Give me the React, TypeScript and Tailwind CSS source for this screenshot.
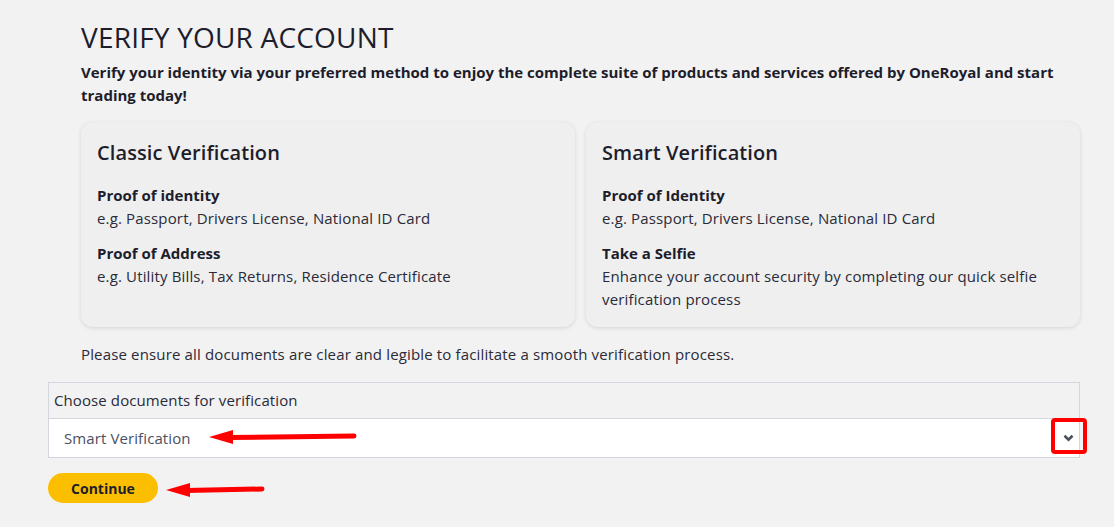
import React from 'react';

type Item = { title: string; text: string };

const Card = (props: { title: string; items: Item[] }) => {
  return (
    <div className="flex-1 rounded-xl bg-[#efefef] px-4 pt-[18px] pb-4 shadow-[0_1px_4px_rgba(0,0,0,0.12)]">
      <p className="text-[20px] font-semibold leading-[26px] tracking-[0.1px] text-[#1d1d2b]">{props.title}</p>
      <div className="mt-[18px] flex flex-col gap-[12px]">
        {props.items.map((item) => (
          <div key={item.title}>
            <p className="text-[15px] font-bold leading-[23px] text-[#1d1d2b]">{item.title}</p>
            <p className="text-[15px] leading-[23px] tracking-[0.15px] text-[#2a2a38]">{item.text}</p>
          </div>
        ))}
      </div>
    </div>
  );
};

const Arrow = (props: { className: string; width: number }) => (
  <svg className={props.className} width={props.width} height="16" viewBox={`0 0 ${props.width} 16`}>
    <polygon points="0,8 24,1 24,15" fill="#ff0000" />
    <line x1="20" y1="8.5" x2={props.width - 3} y2="7" stroke="#ff0000" strokeWidth="5" strokeLinecap="round" />
  </svg>
);

const App = () => {
  return (
    <div className="relative min-h-[527px] bg-[#f2f2f2] pl-12 pr-[34px] pt-[20px] font-['Open_Sans',sans-serif] text-[#1d1d2b]">
      <div className="pl-[33px]">
        <h1 className="text-[28px] font-normal leading-[34px] tracking-[0.2px] text-[#1d1d2b]">VERIFY YOUR ACCOUNT</h1>
        <p className="mt-[7px] text-[15px] font-bold leading-[23px]">
          Verify your identity via your preferred method to enjoy the complete suite of products and services offered by OneRoyal and start trading today!
        </p>
        <div className="mt-[15px] flex gap-[11px]">
          <Card
            title="Classic Verification"
            items={[
              { title: 'Proof of identity', text: 'e.g. Passport, Drivers License, National ID Card' },
              { title: 'Proof of Address', text: 'e.g. Utility Bills, Tax Returns, Residence Certificate' },
            ]}
          />
          <Card
            title="Smart Verification"
            items={[
              { title: 'Proof of Identity', text: 'e.g. Passport, Drivers License, National ID Card' },
              {
                title: 'Take a Selfie',
                text: 'Enhance your account security by completing our quick selfie verification process',
              },
            ]}
          />
        </div>
        <p className="mt-[16px] text-[15px] leading-[23px] tracking-[0.15px] text-[#2a2a38]">
          Please ensure all documents are clear and legible to facilitate a smooth verification process.
        </p>
      </div>

      <div className="mt-[16px] border border-[#d3d6dc]">
        <div className="flex h-[35px] items-center px-[5px] text-[15px] tracking-[0.1px] text-[#2a2a38]">
          Choose documents for verification
        </div>
        <div className="relative flex h-[39px] items-center border-t border-[#d3d6dc] bg-white pl-[15px] text-[15px] tracking-[0.1px] text-[#4a5060]">
          Smart Verification
          <svg className="absolute right-[5px] top-[15px]" width="11" height="8" viewBox="0 0 11 8">
            <path d="M1.5 1.8 L5.5 5.6 L9.5 1.8" fill="none" stroke="#4a4f5a" strokeWidth="2.6" />
          </svg>
        </div>
      </div>

      <button className="mt-[15px] h-[30px] w-[110px] rounded-full bg-[#fcbf00] text-[14px] font-bold text-[#1d1d2b]">
        Continue
      </button>

      <div className="absolute left-[1051px] top-[418px] h-[36px] w-[36px] rounded-[4px] border-[4px] border-[#ff0000]" />
      <Arrow className="absolute left-[209px] top-[429px]" width={148} />
      <Arrow className="absolute left-[166px] top-[482px]" width={99} />
    </div>
  );
};

export default App;
